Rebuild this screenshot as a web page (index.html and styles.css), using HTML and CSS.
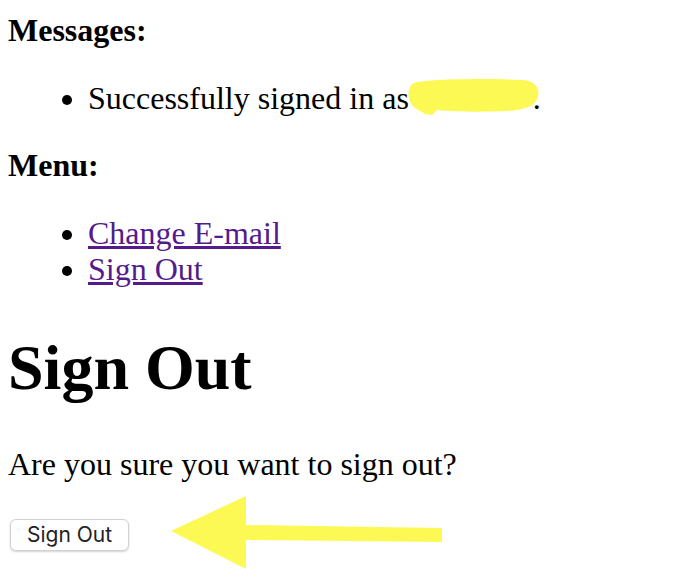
FILE: index.html
```html
<!DOCTYPE html>
<html>
<head>
<meta charset="utf-8">
<link rel="stylesheet" href="styles.css">
</head>
<body>
<div class="page">
  <p class="label">Messages:</p>
  <ul class="list">
    <li>Successfully signed in as <span class="redacted"><svg class="blob" width="136" height="40" viewBox="0 0 136 40"><path d="M10 5 C40 1 100 2 116 3 C130 4 134 14 130 22 C127 30 116 33 100 34 C80 35 50 35 30 33 L25 38 L18 37 L8 31 C3 27 0 19 2 13 C4 7 6 6 10 5 Z" fill="#fcf955"/></svg></span>.</li>
  </ul>
  <p class="label">Menu:</p>
  <ul class="list">
    <li><a href="#">Change E-mail</a></li>
    <li><a href="#">Sign Out</a></li>
  </ul>
  <h1 class="title">Sign Out</h1>
  <p class="text">Are you sure you want to sign out?</p>
  <form class="form">
    <button type="button" class="btn">Sign Out</button>
    <svg class="arrow" width="275" height="78" viewBox="0 0 275 78"><path d="M0 36 L75 1 L75 30 L271 33 L271 47 L75 45 L75 74 Z" fill="#fcf955"/></svg>
  </form>
</div>
</body>
</html>
```
FILE: styles.css
```css
html, body {
  margin: 0;
  padding: 0;
  background: #fff;
}
.page {
  padding: 12px 8px 40px 8px;
  font-family: "Liberation Serif", "Times New Roman", serif;
  font-size: 32px;
  color: #000;
}
.label {
  margin: 0;
  font-weight: bold;
  line-height: 37px;
}
.list {
  margin: 31px 0;
  padding-left: 80px;
  line-height: 36px;
}
.list a {
  color: #551a8b;
}
.redacted {
  display: inline-block;
  position: relative;
  width: 116px;
  height: 20px;
}
.blob {
  position: absolute;
  left: -10px;
  top: -12px;
}
.title {
  margin: 44px 0 41px 0;
  font-size: 64px;
  line-height: 74px;
  font-weight: bold;
}
.text {
  margin: 0 0 30px 0;
  line-height: 37px;
}
.form {
  position: relative;
  margin: 0;
  padding-left: 2px;
  height: 32px;
}
.btn {
  font-family: Inter, "Liberation Sans", Arial, sans-serif;
  font-size: 21px;
  color: #222;
  background: #fff;
  border: 1px solid #d2d2d2;
  border-radius: 6px;
  box-shadow: 0 1px 2px rgba(0,0,0,0.18);
  height: 32px;
  width: 119px;
  padding: 0;
}
.arrow {
  position: absolute;
  left: 163px;
  top: -18px;
}
```
